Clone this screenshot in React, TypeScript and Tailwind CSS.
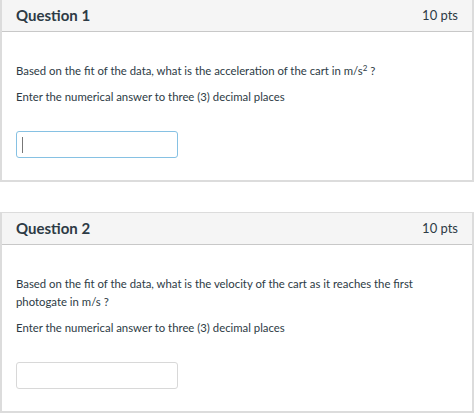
const font = { fontFamily: 'Lato, "Noto Sans", sans-serif' };

function QuestionCard({
  title,
  points,
  lines,
  focused,
}: {
  title: string;
  points: string;
  lines: React.ReactNode;
  focused?: boolean;
}) {
  return (
    <div className="border-x-2 border-b-2 border-t border-[#dcdcdc] bg-white">
      <div className="flex h-8 items-center justify-between border-b border-[#c8c8c8] bg-[#f5f5f5] pl-[14px] pr-[14px]">
        <span className="text-[15px] font-bold text-[#2d3b45]">{title}</span>
        <span className="text-[13px] text-[#2d3b45]">{points}</span>
      </div>
      <div className="px-[14px] pt-[30px] pb-[22px] text-[11.35px] leading-[18px] text-[#2d3b45]">
        {lines}
        <p className="mt-2">Enter the numerical answer to three (3) decimal places</p>
        <div
          className={`mt-[25px] flex h-[27px] w-[162px] items-center rounded-[3px] border pl-[5px] ${
            focused ? 'border-[#86c1e3]' : 'border-[#d8d8d8]'
          }`}
        >
          {focused && <span className="h-[16px] w-px bg-[#777]" />}
        </div>
      </div>
    </div>
  );
}

export default function App() {
  return (
    <div className="h-[414px] w-[474px] overflow-hidden bg-white" style={font}>
      <div className="-mt-px">
        <QuestionCard
          title="Question 1"
          points="10 pts"
          focused
          lines={
            <p className="h-[18px]">
              Based on the fit of the data, what is the acceleration of the cart in m/s
              <sup className="text-[8px]">2</sup> ?
            </p>
          }
        />
      </div>
      <div className="mt-[30px]">
        <QuestionCard
          title="Question 2"
          points="10 pts"
          lines={
            <p className="pr-[30px]">
              Based on the fit of the data, what is the velocity of the cart as it reaches the first
              photogate in m/s ?
            </p>
          }
        />
      </div>
    </div>
  );
}
